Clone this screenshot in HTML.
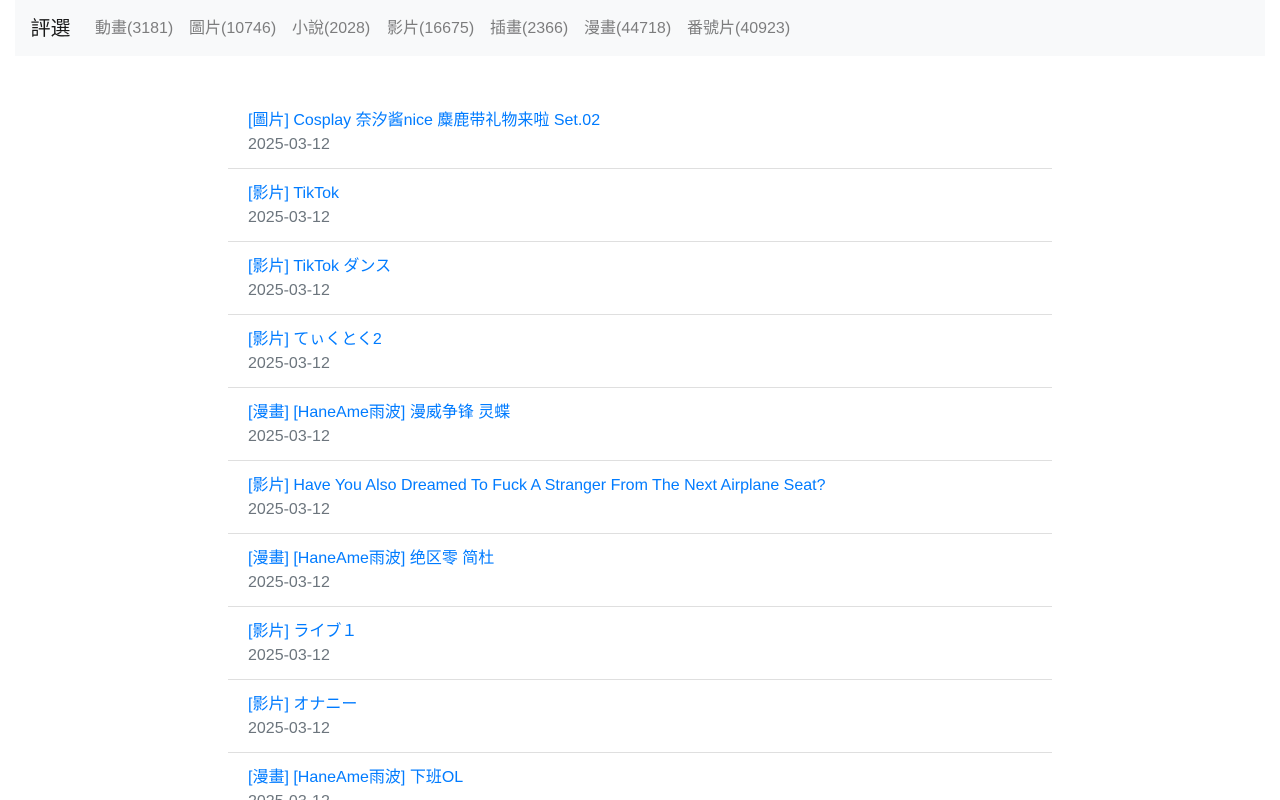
<!DOCTYPE html>
<html>
<head>
<meta charset="utf-8">
<title>評選</title>
<style>
html,body{margin:0;padding:0;background:#fff;width:1280px;height:800px;overflow:hidden}
body{font-family:"Liberation Sans","Noto Sans CJK SC",sans-serif;font-size:16px;line-height:24px;color:#212529;position:relative}
nav{position:absolute;left:15px;top:0;width:1250px;height:56px;background:#f8f9fa}
nav .brand{position:absolute;left:15.5px;top:14px;font-size:20px;line-height:30px;color:rgba(0,0,0,.9)}
nav a{position:absolute;top:17px;color:rgba(0,0,0,.5);text-decoration:none;white-space:nowrap}
.list{position:absolute;left:228px;top:96px;width:824px}
.item{border-bottom:1px solid rgba(0,0,0,.125);padding:13px 20px 0;box-sizing:border-box;height:73px}
.item a{display:block;color:#007bff;text-decoration:none;white-space:nowrap}
.item div{color:#6c757d}
</style>
</head>
<body>
<nav>
<span class="brand">評選</span>
<a style="left:80px">動畫(3181)</a>
<a style="left:174px">圖片(10746)</a>
<a style="left:277px">小說(2028)</a>
<a style="left:372px">影片(16675)</a>
<a style="left:475px">插畫(2366)</a>
<a style="left:569px">漫畫(44718)</a>
<a style="left:672px">番號片(40923)</a>
</nav>
<div class="list">
<div class="item"><a>[圖片] Cosplay 奈汐酱nice 麋鹿带礼物来啦 Set.02</a><div>2025-03-12</div></div>
<div class="item"><a>[影片] TikTok</a><div>2025-03-12</div></div>
<div class="item"><a>[影片] TikTok ダンス</a><div>2025-03-12</div></div>
<div class="item"><a>[影片] てぃくとく2</a><div>2025-03-12</div></div>
<div class="item"><a>[漫畫] [HaneAme雨波] 漫威争锋 灵蝶</a><div>2025-03-12</div></div>
<div class="item"><a>[影片] Have You Also Dreamed To Fuck A Stranger From The Next Airplane Seat?</a><div>2025-03-12</div></div>
<div class="item"><a>[漫畫] [HaneAme雨波] 绝区零 简杜</a><div>2025-03-12</div></div>
<div class="item"><a>[影片] ライブ１</a><div>2025-03-12</div></div>
<div class="item"><a>[影片] オナニー</a><div>2025-03-12</div></div>
<div class="item"><a>[漫畫] [HaneAme雨波] 下班OL</a><div>2025-03-12</div></div>
</div>
</body>
</html>
